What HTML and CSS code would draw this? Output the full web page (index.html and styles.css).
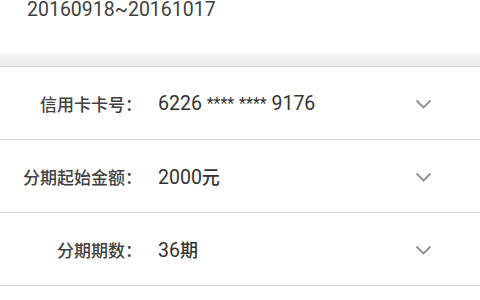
FILE: index.html
```html
<!DOCTYPE html>
<html lang="zh-CN">
<head>
<meta charset="utf-8">
<link rel="stylesheet" href="styles.css">
</head>
<body>
<div class="page">
  <div class="period">20160918~20161017</div>
  <div class="band"></div>
  <div class="list">
    <div class="row">
      <div class="label">信用卡卡号：</div>
      <div class="value">6226 <span class="mask">****</span> <span class="mask">****</span> 9176</div>
      <svg class="chev" width="17" height="10" viewBox="0 0 17 10"><path d="M1.5 1.5 L8.5 8.5 L15.5 1.5" fill="none" stroke="#8e8e8e" stroke-width="1.8"/></svg>
    </div>
    <div class="row">
      <div class="label">分期起始金额：</div>
      <div class="value">2000<span class="cjk">元</span></div>
      <svg class="chev" width="17" height="10" viewBox="0 0 17 10"><path d="M1.5 1.5 L8.5 8.5 L15.5 1.5" fill="none" stroke="#8e8e8e" stroke-width="1.8"/></svg>
    </div>
    <div class="row">
      <div class="label">分期期数：</div>
      <div class="value">36<span class="cjk">期</span></div>
      <svg class="chev" width="17" height="10" viewBox="0 0 17 10"><path d="M1.5 1.5 L8.5 8.5 L15.5 1.5" fill="none" stroke="#8e8e8e" stroke-width="1.8"/></svg>
    </div>
  </div>
</div>
</body>
</html>
```

FILE: styles.css
```css
html, body {
  margin: 0;
  padding: 0;
  background: #ffffff;
}
.page {
  width: 480px;
  height: 300px;
  overflow: hidden;
  font-family: Roboto, "Noto Sans CJK SC", sans-serif;
  color: #3a3a3a;
}
.period {
  height: 54px;
  box-sizing: border-box;
  padding-left: 27px;
  font-size: 19.5px;
  line-height: 20px;
  color: #3f3f3f;
}
.band {
  height: 12px;
  background: linear-gradient(#f5f5f5, #ebebeb);
  border-bottom: 1px solid #d2d2d2;
}
.row {
  height: 72px;
  border-bottom: 1px solid #d4d4d4;
  display: flex;
  align-items: center;
}
.label {
  width: 142px;
  flex: none;
  text-align: right;
  font-family: "Noto Sans CJK SC", sans-serif;
  font-size: 17px;
  font-weight: 500;
  color: #404040;
}
.value {
  flex: 1;
  padding-left: 16px;
  font-size: 19.5px;
  color: #333333;
}
.mask {
  font-size: 16px;
  vertical-align: 1px;
}
.cjk {
  font-family: "Noto Sans CJK SC", sans-serif;
  font-size: 18px;
  font-weight: 500;
}
.chev {
  flex: none;
  margin-right: 48px;
  margin-top: 2px;
}
```
